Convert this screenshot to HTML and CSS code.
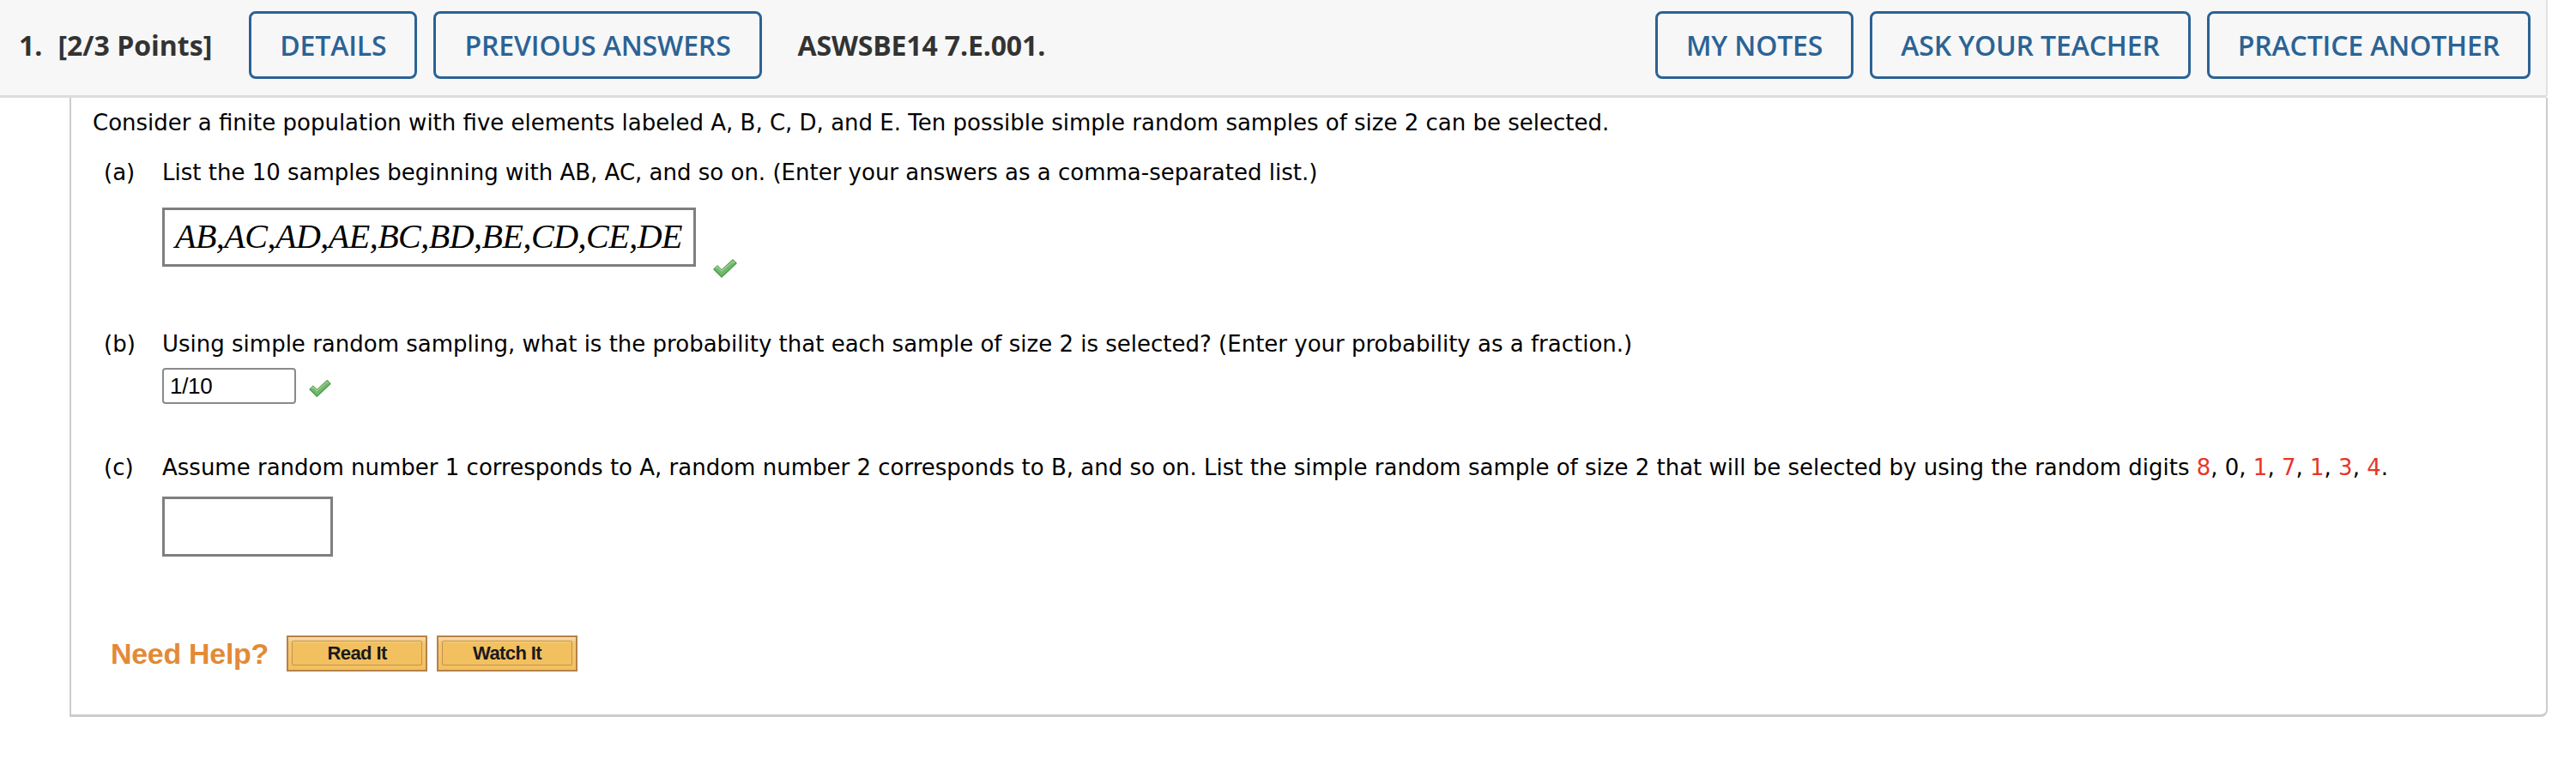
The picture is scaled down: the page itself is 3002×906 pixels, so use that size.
FILE: index.html
```html
<!DOCTYPE html>
<html>
<head>
<meta charset="utf-8">
<link rel="stylesheet" href="styles.css">
</head>
<body>
<div class="page">
  <div class="header">
    <div class="qnum"><span class="num">1.</span>[2/3 Points]</div>
    <div class="btn">DETAILS</div>
    <div class="btn">PREVIOUS ANSWERS</div>
    <div class="code">ASWSBE14 7.E.001.</div>
    <div class="spacer"></div>
    <div class="btn">MY NOTES</div>
    <div class="btn">ASK YOUR TEACHER</div>
    <div class="btn">PRACTICE ANOTHER</div>
  </div>
  <div class="content">
    <p class="intro">Consider a finite population with five elements labeled A, B, C, D, and E. Ten possible simple random samples of size 2 can be selected.</p>

    <div class="part part-a">
      <div class="prow"><span class="plabel">(a)</span><span class="ptext">List the 10 samples beginning with AB, AC, and so on. (Enter your answers as a comma-separated list.)</span></div>
      <div class="answer-row">
        <div class="mathbox">AB,AC,AD,AE,BC,BD,BE,CD,CE,DE</div>
        <svg class="check check-a" viewBox="0 0 30 24" width="30" height="24"><path d="M2 13 L6 9 L11 14 L24 2 L28 6 L11 22 Z" fill="#6fba6a" stroke="#55994f" stroke-width="1.5" stroke-linejoin="round"/><path d="M4 12 L6 10 L11 15 L24 3.5 L26 5.5" fill="none" stroke="#a4d89c" stroke-width="1.2"/></svg>
      </div>
    </div>

    <div class="part part-b">
      <div class="prow"><span class="plabel">(b)</span><span class="ptext">Using simple random sampling, what is the probability that each sample of size 2 is selected? (Enter your probability as a fraction.)</span></div>
      <div class="answer-row">
        <div class="textbox">1/10</div>
        <svg class="check check-b" viewBox="0 0 30 24" width="28" height="22"><path d="M2 13 L6 9 L11 14 L24 2 L28 6 L11 22 Z" fill="#6fba6a" stroke="#55994f" stroke-width="1.5" stroke-linejoin="round"/><path d="M4 12 L6 10 L11 15 L24 3.5 L26 5.5" fill="none" stroke="#a4d89c" stroke-width="1.2"/></svg>
      </div>
    </div>

    <div class="part part-c">
      <div class="prow"><span class="plabel">(c)</span><span class="ptext">Assume random number 1 corresponds to A, random number 2 corresponds to B, and so on. List the simple random sample of size 2 that will be selected by using the random digits <span class="red">8</span>, 0, <span class="red">1</span>, <span class="red">7</span>, <span class="red">1</span>, <span class="red">3</span>, <span class="red">4</span>.</span></div>
      <div class="answer-row">
        <div class="emptybox"></div>
      </div>
    </div>

    <div class="help">
      <span class="need">Need Help?</span>
      <div class="hbtn"><div class="hinner">Read It</div></div>
      <div class="hbtn"><div class="hinner">Watch It</div></div>
    </div>
  </div>
</div>
</body>
</html>
```
FILE: styles.css
```css
html, body {
  margin: 0;
  padding: 0;
  background: #ffffff;
}
.page {
  width: 2969px;
}
.header {
  height: 114px;
  box-sizing: border-box;
  background: #f7f7f7;
  border-bottom: 3px solid #dddddd;
  border-right: 2px solid #e2e2e2;
  border-bottom-right-radius: 4px;
  display: flex;
  align-items: flex-start;
  padding: 13px 18px 0 22px;
  font-family: "Open Sans", "Liberation Sans", sans-serif;
  font-size: 32px;
}
.qnum {
  font-weight: 700;
  color: #333333;
  height: 79px;
  line-height: 79px;
  margin-right: 43px;
}
.qnum .num {
  margin-right: 18px;
}
.btn {
  height: 79px;
  box-sizing: border-box;
  border: 3px solid #2b6395;
  border-radius: 8px;
  padding: 0 33px;
  line-height: 73px;
  color: #2b6395;
  font-weight: 600;
  margin-right: 19px;
  white-space: nowrap;
  letter-spacing: -0.15px;
}
.btn:last-child {
  margin-right: 0;
}
.code {
  margin-left: 23px;
  font-weight: 700;
  color: #333333;
  line-height: 79px;
  letter-spacing: -0.15px;
}
.spacer {
  flex: 1;
}
.content {
  margin-left: 81px;
  border-left: 2px solid #cccccc;
  border-right: 2px solid #cccccc;
  border-bottom: 3px solid #cccccc;
  border-bottom-right-radius: 8px;
  padding: 11px 0 50px 25px;
  font-family: "DejaVu Sans", Verdana, sans-serif;
  font-size: 26px;
  color: #000000;
}
.intro {
  margin: 0;
  line-height: 36px;
}
.prow {
  display: flex;
  line-height: 36px;
  padding-left: 13px;
}
.plabel {
  width: 68px;
  flex: none;
}
.red {
  color: #e8352b;
}
.part-a {
  margin-top: 22px;
}
.part-a .answer-row {
  margin-top: 23px;
}
.part-b {
  margin-top: 72px;
}
.part-b .answer-row {
  margin-top: 10px;
}
.part-c {
  margin-top: 56px;
}
.part-c .answer-row {
  margin-top: 16px;
}
.answer-row {
  padding-left: 81px;
  display: flex;
  align-items: flex-start;
}
.mathbox {
  width: 622px;
  height: 69px;
  box-sizing: border-box;
  border: 3px solid #7f7f7f;
  font-family: "Liberation Serif", "Times New Roman", serif;
  font-style: italic;
  font-size: 40px;
  line-height: 62px;
  padding-left: 12px;
  letter-spacing: -0.5px;
  color: #000;
}
.check-a {
  margin-left: 19px;
  margin-top: 59px;
  margin-bottom: -14px;
}
.textbox {
  width: 156px;
  height: 42px;
  box-sizing: border-box;
  border: 2px solid #8a8a8a;
  border-radius: 4px;
  font-family: "Liberation Sans", Arial, sans-serif;
  font-size: 26px;
  line-height: 38px;
  padding-left: 7px;
  letter-spacing: -0.3px;
}
.check-b {
  margin-left: 14px;
  margin-top: 13px;
}
.emptybox {
  width: 199px;
  height: 70px;
  box-sizing: border-box;
  border: 3px solid #7f7f7f;
}
.help {
  margin-top: 92px;
  padding-left: 21px;
  display: flex;
  align-items: center;
  height: 42px;
}
.need {
  font-family: "Liberation Sans", Arial, sans-serif;
  font-weight: 700;
  font-size: 34px;
  color: #e38a35;
  margin-right: 21px;
  letter-spacing: -0.3px;
}
.hbtn {
  width: 164px;
  height: 42px;
  box-sizing: border-box;
  border: 2px solid #b58248;
  background: linear-gradient(#f8dcb0 0, #f3c873 6px, #f3c060 100%);
  padding: 4px 4px 5px 4px;
  margin-right: 11px;
}
.hinner {
  height: 100%;
  box-sizing: border-box;
  border: 1px solid #c3924f;
  border-radius: 2px;
  background: #f3c060;
  box-shadow: inset 0 1px 0 #f7d48a;
  font-family: "Liberation Sans", Arial, sans-serif;
  font-weight: 700;
  font-size: 22px;
  line-height: 27px;
  text-align: center;
  color: #1a1a1a;
  letter-spacing: -0.6px;
}
```
